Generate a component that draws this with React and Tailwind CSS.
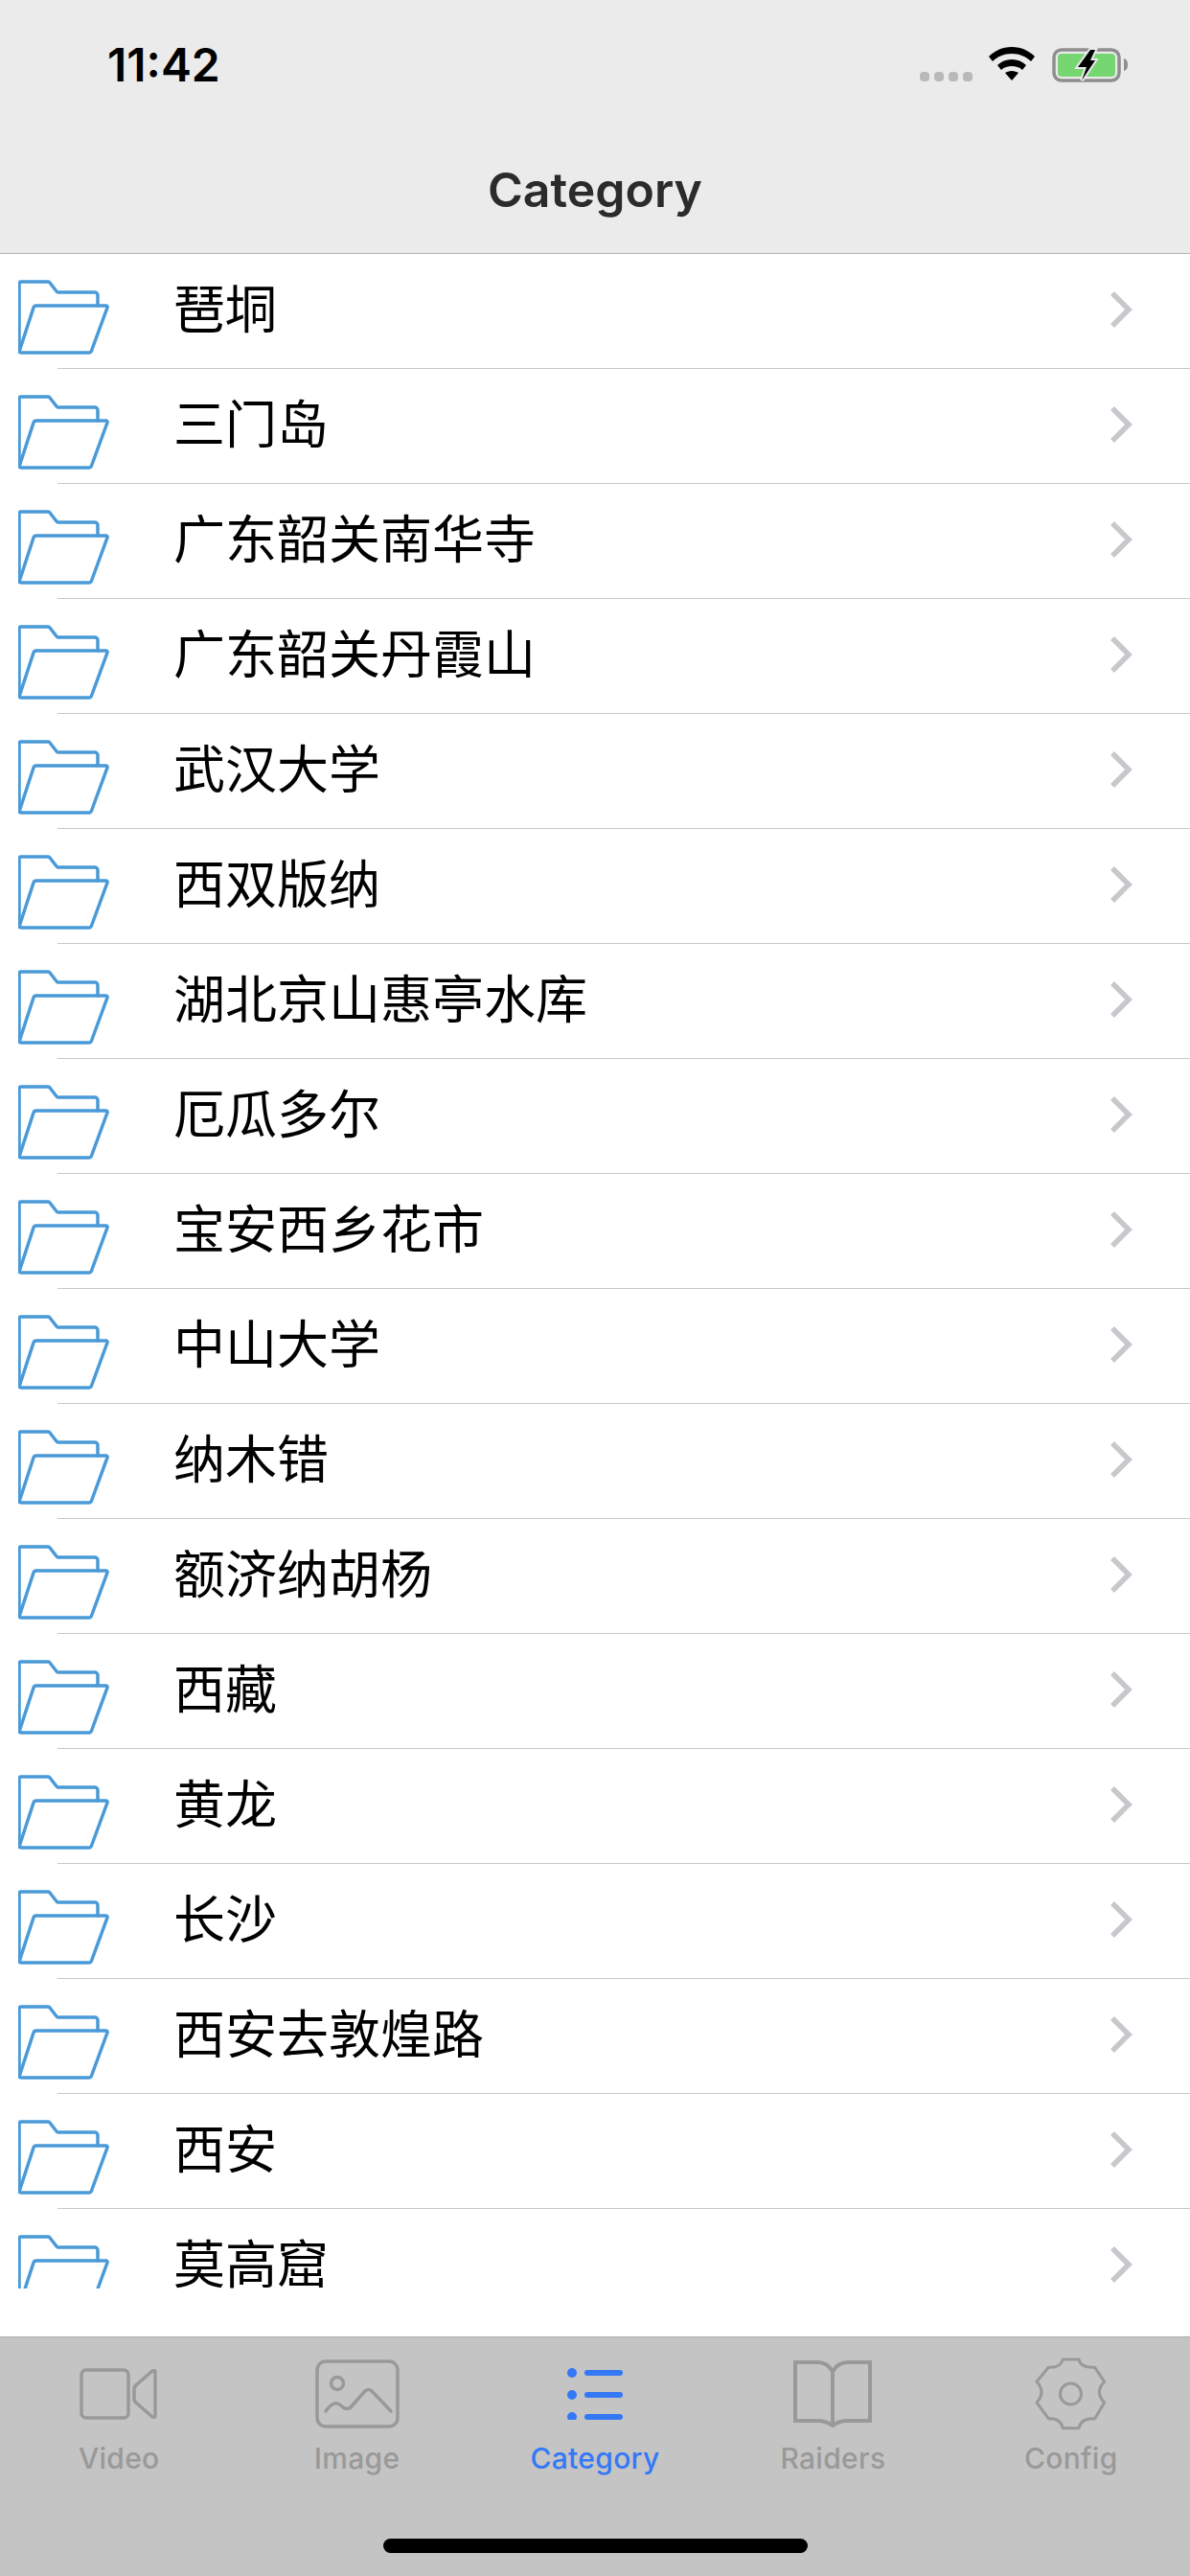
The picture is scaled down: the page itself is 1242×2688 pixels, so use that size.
import React from 'react';

const categories = [
  '琶垌', '三门岛', '广东韶关南华寺', '广东韶关丹霞山', '武汉大学', '西双版纳',
  '湖北京山惠亭水库', '厄瓜多尔', '宝安西乡花市', '中山大学', '纳木错', '额济纳胡杨',
  '西藏', '黄龙', '长沙', '西安去敦煌路', '西安', '莫高窟',
];

const sans = 'font-["Inter","Liberation_Sans",sans-serif]';

function FolderIcon() {
  return (
    <svg width="98" height="80" viewBox="0 0 98 80" fill="none" stroke="#4a9ad8" strokeWidth="3.500" strokeLinejoin="round" strokeLinecap="round">
      <path d="M1 75V4a2 2 0 0 1 2-2h28a2 2 0 0 1 2 1l7 9a2 2 0 0 0 2 1h38a3 3 0 0 1 3 3v11" />
      <path d="M1 75L16 29a3 3 0 0 1 3-2h72.500a1.500 1.500 0 0 1 1.500 2L76.500 74a3 3 0 0 1-3 2H3a2 2 0 0 1-2-2" />
    </svg>
  );
}

function Chevron() {
  return (
    <svg width="26" height="42" viewBox="0 0 26 42" fill="none" stroke="#c7c7cc" strokeWidth="5.500">
      <path d="M3 4l17 17L3 38" />
    </svg>
  );
}

function CategoryRow({ name, last }) {
  return (
    <div className="relative h-[120px] flex items-center shrink-0">
      <div className={last ? 'ml-[19px] self-start pt-[27px] h-[83px] overflow-hidden' : 'ml-[19px] mt-[14px]'}>
        <FolderIcon />
      </div>
      <span className='ml-[64px] pb-[10px] text-[54px] leading-[70px] text-black font-["Noto_Sans_CJK_SC","Noto_Sans_CJK_TC",sans-serif]'>{name}</span>
      <div className="ml-auto mr-[58px] mb-[5px]">
        <Chevron />
      </div>
      {!last && <div className="absolute left-[60px] right-0 bottom-0 h-[1px] bg-[#c8c7cc]" />}
    </div>
  );
}

function VideoIcon() {
  return (
    <svg width="82" height="54" viewBox="0 0 82 54" fill="none" stroke="#999999" strokeWidth="3.500" strokeLinejoin="round">
      <rect x="2" y="2" width="49" height="50" rx="5" />
      <path d="M79 4v46q0 2-3 1L60 37q-3-2-3-5V22q0-3 3-5L76 3q3-1 3 1z" />
    </svg>
  );
}

function ImageIcon() {
  return (
    <svg width="88" height="72" viewBox="0 0 88 72" fill="none" stroke="#999999" strokeWidth="3.500" strokeLinecap="round" strokeLinejoin="round">
      <rect x="2" y="2" width="84" height="68" rx="9" />
      <circle cx="23" cy="25" r="6.500" />
      <path d="M11 54q4-6 9-8 4-1 9 4 4 3 8 0l15-17q4-3 7 0l20 21" />
    </svg>
  );
}

function ListIcon() {
  return (
    <svg width="58" height="54" viewBox="0 0 58 54" fill="#3478f6">
      <circle cx="5" cy="5" r="5" />
      <circle cx="5" cy="28" r="5" />
      <circle cx="5" cy="51" r="5" />
      <rect x="18" y="2" width="40" height="6" rx="3" />
      <rect x="18" y="25" width="40" height="6" rx="3" />
      <rect x="18" y="48" width="40" height="6" rx="3" />
    </svg>
  );
}

function BookIcon() {
  return (
    <svg width="82" height="70" viewBox="0 0 82 70" fill="none" stroke="#999999" strokeWidth="4">
      <path d="M2 2h23q11 0 16 10 5-10 16-10h23v61H57q-9 0-16 5-7-5-16-5H2z" />
      <path d="M41 12v56" />
    </svg>
  );
}

function GearIcon() {
  return (
    <svg width="76" height="76" viewBox="0 0 76 76" fill="none" stroke="#999999" strokeWidth="3" strokeLinejoin="round">
      <path d="M29.300 2H46Q48 11 62.700 10.300L72.700 25.300Q62 36 72.700 47L62.700 63.700Q48 63 46 73.700H29.300Q27 63 14.300 63.700L2 47Q12 36 2 25.300L14.300 10.300Q27 11 29.300 2z" />
      <circle cx="37.500" cy="38" r="11" />
    </svg>
  );
}

function Tab({ label, active, children }) {
  return (
    <div className="flex flex-col items-center">
      <div className="h-[78px] flex items-center justify-center">{children}</div>
      <span className={`mt-[10px] text-[30px] leading-[36px] font-medium tracking-[0.3px] ${sans} ${active ? 'text-[#3478f6]' : 'text-[#999999]'}`}>{label}</span>
    </div>
  );
}

export default function App() {
  return (
    <div className="w-[1242px] h-[2688px] flex flex-col bg-white overflow-hidden">
      {/* Status + nav bar */}
      <div className="h-[265px] shrink-0 bg-[#ebebeb] border-b border-[#b2b2b2] flex flex-col">
        <div className="h-[132px] px-[112px] pt-[42px] flex justify-between">
          <span className={`text-[48px] leading-[52px] font-semibold text-black ${sans}`}>11:42</span>
          <div className="flex items-start gap-[16px] mr-[-47px] pt-[7px]">
            <div className="flex gap-[5px] mt-[26px]">
              <span className="w-[10px] h-[10px] rounded-[4px] bg-[#b9b9b9]" />
              <span className="w-[10px] h-[10px] rounded-[4px] bg-[#b9b9b9]" />
              <span className="w-[10px] h-[10px] rounded-[4px] bg-[#b9b9b9]" />
              <span className="w-[10px] h-[10px] rounded-[4px] bg-[#b9b9b9]" />
            </div>
            <svg width="50" height="36" viewBox="0 0 50 36" fill="#000000">
              <path d="M25 0C15 0 7 4 1 10l4 5C10 10 17 7 25 7s15 3 20 8l4-5C43 4 35 0 25 0z" />
              <path d="M25 13c-6 0-11 2-15 6l4 5c3-3 7-4 11-4s8 1 11 4l4-5c-4-4-9-6-15-6z" />
              <path d="M25 25c-3 0-5 1-7 2l7 8 7-8c-2-1-4-2-7-2z" />
            </svg>
            <svg width="80" height="38" viewBox="0 0 80 38" fill="none">
              <rect x="3" y="3" width="68" height="32" rx="8" stroke="#8e8e8e" strokeWidth="3.500" />
              <rect x="7" y="7" width="60" height="24" rx="4" fill="#76d672" />
              <path d="M76 12q4 1 4 6.500T76 25z" fill="#8e8e8e" />
              <path d="M41 3L28 21h9l-5 14 14-21h-5l5-11z" fill="#000000" stroke="#ebebeb" strokeWidth="4" paintOrder="stroke" />
            </svg>
          </div>
        </div>
        <div className={`text-center text-[50px] leading-[60px] font-semibold text-[#2b2b2b] mt-[36px] ${sans}`}>Category</div>
      </div>

      {/* Folder list */}
      <div className="flex-1 min-h-0 flex flex-col overflow-hidden">
        {categories.map((name, i) => (
          <CategoryRow key={name} name={name} last={i === categories.length - 1} />
        ))}
      </div>

      {/* Tab bar */}
      <div className="h-[250px] shrink-0 bg-[#c4c4c4] border-t border-[#adadad] flex flex-col">
        <div className="grid grid-cols-5 pt-[20px]">
          <Tab label="Video"><VideoIcon /></Tab>
          <Tab label="Image"><ImageIcon /></Tab>
          <Tab label="Category" active><ListIcon /></Tab>
          <Tab label="Raiders"><BookIcon /></Tab>
          <Tab label="Config"><GearIcon /></Tab>
        </div>
        <div className="mt-auto mb-[24px] mx-auto w-[443px] h-[15px] rounded-full bg-black" />
      </div>
    </div>
  );
}
